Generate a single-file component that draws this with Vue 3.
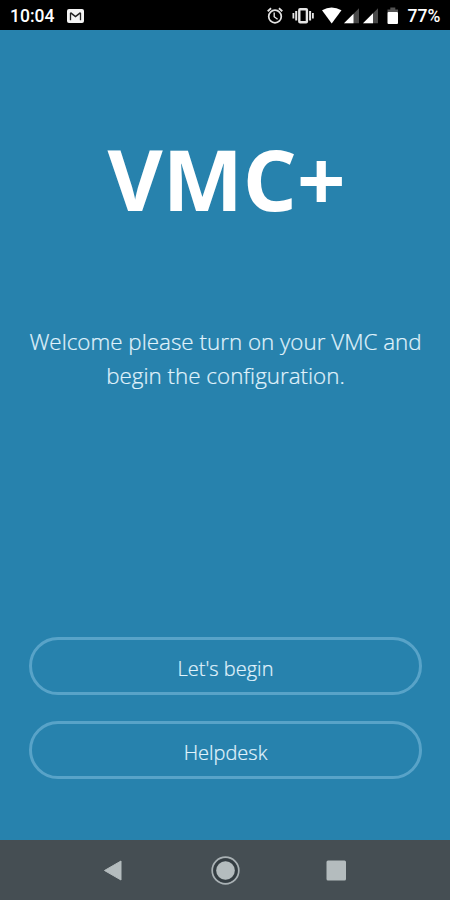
<script setup>
const actions = ["Let's begin", 'Helpdesk']
</script>

<template>
  <div class="screen">
    <header class="status">
      <span class="time">10:04</span>
      <svg class="mail" width="17" height="14" viewBox="0 0 17 14">
        <rect width="17" height="14" rx="2" fill="#f4f4f4" />
        <path d="M3.5 11.3V4M13.5 11.3V4" fill="none" stroke="#222" stroke-width="1.3" />
        <path d="M3.4 3.6l5.1 4 5.1-4" fill="none" stroke="#222" stroke-width="1.6" />
      </svg>
      <svg class="indicators" width="138" height="30" viewBox="264 0 138 30">
        <g fill="none" stroke="#e4e4e4">
          <circle cx="275" cy="16.5" r="6.3" stroke-width="1.7" />
          <path d="M267.7 11.2l3.4-2.9M282.3 11.2l-3.4-2.9" stroke-width="1.8" />
          <path d="M274.2 12.5v4.2l3.4 2.6" stroke-width="1.4" />
          <rect x="299.3" y="9.2" width="7.6" height="13" rx=".8" stroke-width="2.4" />
          <path d="M296.2 11v9.5M310.1 11v9.5" stroke-width="2" />
          <path d="M293.4 13v5.5M312.9 13v5.5" stroke-width="1.8" />
        </g>
        <path d="M322 10.2q9.5-5.4 19.5 0L331.7 23.5z" fill="#fff" />
        <path d="M344 23.2l15-15v15zM363 23.2l15-15v15z" fill="#4a4a4a" />
        <path d="M344 23.2l9.5-9.5v9.5zM363 23.2l10-10v10z" fill="#fff" />
        <path d="M390.3 7.5h5v3h-5z" fill="#555" />
        <rect x="387.5" y="9.5" width="10.5" height="3" fill="#555" />
        <rect x="387.5" y="12" width="10.5" height="12" rx="1" fill="#fff" />
      </svg>
      <span class="charge">77%</span>
    </header>

    <main class="content">
      <h1>VMC+</h1>
      <p>Welcome please turn on your VMC and<br />begin the configuration.</p>
      <div class="actions">
        <button v-for="label in actions" :key="label" type="button">{{ label }}</button>
      </div>
    </main>

    <nav class="navigation">
      <svg width="450" height="60" viewBox="0 840 450 60" fill="#b4bcbe">
        <path d="M104.5 870.5L121 861v19z" stroke="#b4bcbe" stroke-linejoin="round" />
        <circle cx="225.5" cy="870.5" r="13.3" fill="none" stroke="#a9b1b4" stroke-width="1.7" />
        <circle cx="225.5" cy="870.5" r="10.8" fill="none" stroke="#343d42" stroke-width="2.4" />
        <circle cx="225.5" cy="870.5" r="9.3" />
        <rect x="326.5" y="860.5" width="19.5" height="20" rx="1.5" />
      </svg>
    </nav>
  </div>
</template>

<style>
body {
  margin: 0;
}
</style>

<style scoped>
.screen {
  width: 450px;
  height: 900px;
  display: flex;
  flex-direction: column;
  overflow: hidden;
  background: #2782ad;
  color: #fff;
  font-family: "Open Sans", sans-serif;
}

.status {
  flex: none;
  height: 30px;
  box-sizing: border-box;
  display: flex;
  align-items: center;
  padding: 0 10px 0 10px;
  background: #000;
  font-family: Roboto, sans-serif;
  font-size: 17.5px;
  font-weight: 500;
  line-height: 30px;
}

.time {
  width: 57px;
  padding-top: 2px;
}

.mail {
  margin-top: 2px;
}

.indicators {
  margin-left: auto;
}

.charge {
  width: 34px;
  margin-left: 5.5px;
  padding-top: 2px;
  margin-right: -1.5px;
  white-space: nowrap;
}

.content {
  flex: 1;
  display: flex;
  flex-direction: column;
  align-items: center;
  padding: 88px 28px 61px 29px;
}

h1 {
  margin: 0;
  padding-left: 2px;
  font-size: 85px;
  font-weight: 700;
  line-height: 120px;
}

p {
  margin: 87px 0 0;
  color: #e0f3fc;
  font-size: 22.4px;
  font-weight: 300;
  line-height: 34px;
  text-align: center;
  white-space: nowrap;
  -webkit-text-stroke: 0.2px #e0f3fc;
}

.actions {
  width: 100%;
  display: flex;
  flex-direction: column;
  gap: 26px;
  margin-top: auto;
}

button {
  width: 100%;
  height: 58px;
  padding: 6px 0 0;
  border: 3px solid #58a3c8;
  border-radius: 29px;
  background: transparent;
  color: #e2f4fd;
  font-family: inherit;
  font-size: 20px;
  font-weight: 300;
  line-height: 28px;
  -webkit-text-stroke: 0.2px #e2f4fd;
}

.navigation {
  flex: none;
  height: 60px;
  background: #454e53;
}

.navigation svg {
  display: block;
}
</style>
